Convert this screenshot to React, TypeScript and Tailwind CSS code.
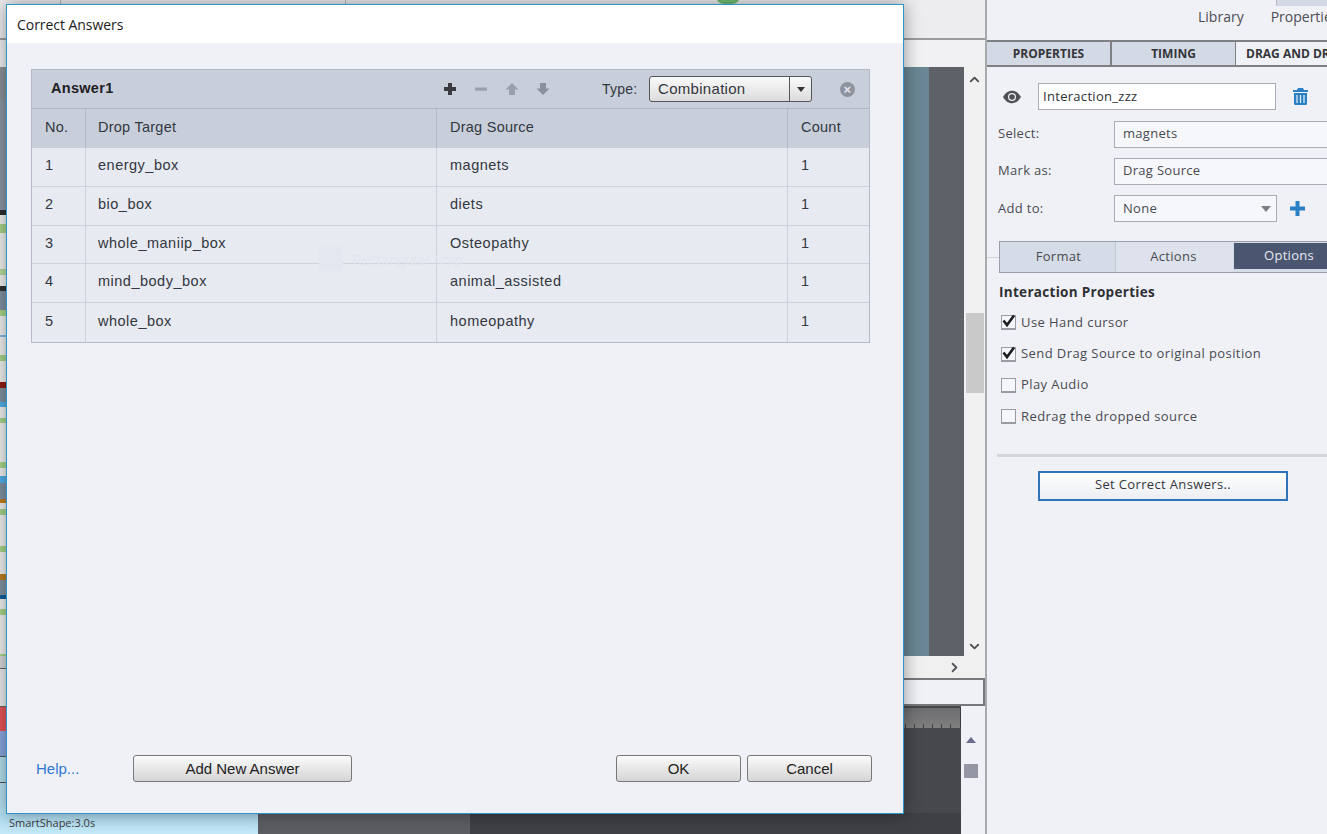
import { ChevronDown, ChevronRight, ChevronUp } from "lucide-react";

const uiFont = "font-['Open_Sans',sans-serif]";
const tableFont = "font-['Liberation_Sans',sans-serif]";

// thin slice of the timeline still visible left of the dialog
const bands = [
  "h-[33px] bg-[#8b9299]",
  "h-[110px] bg-[#8a97a5]",
  "h-[5px] bg-[#2e2e2e]",
  "h-[9px] bg-[#f1f1ef]",
  "h-[9px] bg-[#a9d68c]",
  "h-[36px] bg-[#f1f1ef]",
  "h-[6px] bg-[#b5dc9e]",
  "h-[11px] bg-[#f1f1ef]",
  "h-[5px] bg-[#333333]",
  "h-[19px] bg-[#8292a3]",
  "h-[6px] bg-[#a9d68c]",
  "h-[19px] bg-[#f1f1ef]",
  "h-[2px] bg-[#7cc0e8]",
  "h-[18px] bg-[#f1f1ef]",
  "h-[6px] bg-[#a9d68c]",
  "h-[21px] bg-[#f1f1ef]",
  "h-[6px] bg-[#8f1d12]",
  "h-[14px] bg-[#8292a3]",
  "h-[5px] bg-[#52b0ea]",
  "h-[11px] bg-[#f1f1ef]",
  "h-[6px] bg-[#a9d68c]",
  "h-[39px] bg-[#f1f1ef]",
  "h-[6px] bg-[#a9d68c]",
  "h-[8px] bg-[#f1f1ef]",
  "h-[7px] bg-[#52b0ea]",
  "h-[16px] bg-[#8292a3]",
  "h-[4px] bg-[#bd7f1f]",
  "h-[6px] bg-[#f1f1ef]",
  "h-[6px] bg-[#a9d68c]",
  "h-[31px] bg-[#f1f1ef]",
  "h-[6px] bg-[#a9d68c]",
  "h-[22px] bg-[#f1f1ef]",
  "h-[6px] bg-[#bd7f1f]",
  "h-[15px] bg-[#8292a3]",
  "h-[4px] bg-[#14609e]",
  "h-[10px] bg-[#f1f1ef]",
  "h-[6px] bg-[#a9d68c]",
  "h-[39px] bg-[#f1f1ef]",
  "h-[2px] bg-[#a9d68c]",
  "h-[12px] bg-[#d9d9d9]",
  "h-[1px] bg-[#666666]",
  "h-[37px] bg-[#ececec]",
  "h-[1px] bg-[#666666]",
  "h-[24px] bg-[#e8555a]",
  "h-[25px] bg-[#8ca6e0]",
  "h-[1px] bg-[#555555]",
  "h-[25px] bg-[#b5e0f0]",
  "h-[1px] bg-[#555555]",
  "h-[30px] bg-[#b7e1f2]",
];

const answers = [
  { no: 1, target: "energy_box", source: "magnets" },
  { no: 2, target: "bio_box", source: "diets" },
  { no: 3, target: "whole_maniip_box", source: "Osteopathy" },
  { no: 4, target: "mind_body_box", source: "animal_assisted" },
  { no: 5, target: "whole_box", source: "homeopathy" },
];

const ticks = [10, 30, 50, 70, 90, 110, 130, 150, 170, 190, 210, 230, 250];

function ToolIcon({ d, className }: { d: string; className: string }) {
  return (
    <svg width="16" height="16" viewBox="0 0 16 16" className={className}>
      <path d={d} fill="currentColor" />
    </svg>
  );
}

function GreyButton({ label, className }: { label: string; className: string }) {
  return (
    <button
      type="button"
      className={`${className} h-[27px] rounded-[3px] border border-[#77787c] bg-gradient-to-b from-[#fbfbfb] to-[#d5d5d5] pt-[1px] text-[15px] text-[#222222] ${tableFont}`}
    >
      {label}
    </button>
  );
}

function CheckRow({ label, checked }: { label: string; checked?: boolean }) {
  return (
    <div className="flex h-[31.200px] items-center gap-[5px]">
      <span className="relative h-[15px] w-[15px] border border-b-[2px] border-[#9b9ca3] bg-[#f5f6fa]">
        {checked && (
          <svg width="15" height="15" viewBox="0 0 15 15" className="absolute -left-px -top-[3px]">
            <path d="M2.500 7.500 L6 12 L13 2.500" fill="none" stroke="#1d1d1f" strokeWidth="2.600" />
          </svg>
        )}
      </span>
      <span className="text-[13px] tracking-[0.42px] text-[#4a4b50]">{label}</span>
    </div>
  );
}

function Dialog() {
  return (
    <div className={`absolute left-[6px] top-[4px] flex h-[810px] w-[898px] flex-col border border-[#2f94c8] bg-[#f0f1f7] shadow-[0_0_16px_rgba(0,0,0,0.4)] ${tableFont}`}>
      <div className={`flex h-[38px] items-center bg-white pl-[10px] text-[14px] tracking-[-0.05px] text-[#1c1c1c] ${uiFont}`}>
        Correct Answers
      </div>
      <div className="relative flex flex-1 flex-col px-[24px] pt-[26px]">
        <div className="w-[839px] border border-[#b4bac8] text-[14.5px] tracking-[0.25px] text-[#333740]">
          <div className="flex h-[39px] items-center border-b border-[#b0b6c4] bg-[#c8cfdb]">
            <span className="ml-[19px] w-[391px] text-[14.5px] font-bold tracking-[0.3px] text-[#1f2024]">Answer1</span>
            <div className="flex w-[132px] items-center gap-[15px]">
              <ToolIcon d="M6 2h4v4h4v4h-4v4H6v-4H2V6h4z" className="text-[#3a3b40]" />
              <ToolIcon d="M2 6.500h12v3.200H2z" className="text-[#9aa0ad]" />
              <ToolIcon d="M8 2l6.500 6.500H11V14H5V8.500H1.500z" className="text-[#9aa0ad]" />
              <ToolIcon d="M8 14l6.500-6.500H11V2H5v5.500H1.500z" className="text-[#8b909c]" />
            </div>
            <span className="ml-[28px] w-[47px] text-[14px]">Type:</span>
            <div className="flex h-[26px] w-[163px] items-center rounded-[3px] border border-[#55565a] bg-gradient-to-b from-[#fafafa] to-[#dcdcdc]">
              <span className="w-[139px] pl-[8px] text-[15px] tracking-[0.3px]">Combination</span>
              <span className="flex h-full flex-1 items-center justify-center border-l border-[#55565a]">
                <span className="h-0 w-0 border-x-[4px] border-t-[5px] border-x-transparent border-t-[#333333]" />
              </span>
            </div>
            <span className="ml-[28px] flex h-[15px] w-[15px] items-center justify-center rounded-full bg-[#8f939e] text-[13px] leading-none font-bold text-[#e4e7ef]">
              ×
            </span>
          </div>
          <div className="grid h-[39px] grid-cols-[53px_351px_351px_1fr] bg-[#c8cfdb]">
            <div className="flex items-center pb-[2px] pl-[13px]">No.</div>
            <div className="flex items-center border-l border-[#b4bac8] pb-[2px] pl-[12px]">Drop Target</div>
            <div className="flex items-center border-l border-[#b4bac8] pb-[2px] pl-[13px]">Drag Source</div>
            <div className="flex items-center border-l border-[#b4bac8] pb-[2px] pl-[13px]">Count</div>
          </div>
          {answers.map((row) => (
            <div
              key={row.no}
              className="grid h-[38.800px] grid-cols-[53px_351px_351px_1fr] border-b border-[#cdd2dc] bg-[#e7eaf1] tracking-[0.5px] last:border-b-0"
            >
              <div className="flex items-center pb-[2px] pl-[13px]">{row.no}</div>
              <div className="flex items-center border-l border-[#cdd2dc] pb-[2px] pl-[12px]">{row.target}</div>
              <div className="flex items-center border-l border-[#cdd2dc] pb-[2px] pl-[13px]">{row.source}</div>
              <div className="flex items-center border-l border-[#cdd2dc] pb-[2px] pl-[13px]">{row.no > 0 ? 1 : 0}</div>
            </div>
          ))}
        </div>
        {/* ghost of the previous video frame */}
        <div className={`absolute left-[312px] top-[204px] flex items-center gap-[10px] text-[14px] text-[#e2e5ed] ${uiFont}`}>
          <span className="h-[24px] w-[24px] bg-[#e3e7ef]" />
          Rectangular Snip
        </div>
        <div className="mt-auto mb-[31px] flex items-center">
          <span className="ml-[5px] w-[97px] pt-[1px] text-[15px] text-[#2e78d2]">Help...</span>
          <GreyButton label="Add New Answer" className="w-[219px]" />
          <GreyButton label="OK" className="ml-[264px] w-[125px]" />
          <GreyButton label="Cancel" className="ml-[6px] w-[125px]" />
        </div>
      </div>
    </div>
  );
}

function RightPanel() {
  return (
    <div className={`flex w-[342px] flex-col border-l-[2px] border-[#a9aaad] bg-[#f0f1f7] ${uiFont}`}>
      <div className="relative flex h-[40px] items-end gap-[27px] pb-[13px] pl-[211px] text-[14px] whitespace-nowrap text-[#4c4d52]">
        <span>Library</span>
        <span>Properties</span>
        <span className="absolute left-[289px] top-0 h-[6px] w-[60px] border-l border-[#b7bac4] bg-[#d5d9e5]" />
      </div>
      <div className="flex h-[27px] border-y-[2px] border-y-[#7f8084] text-[12px] font-bold whitespace-nowrap text-[#35363a]">
        <div className="flex w-[125px] items-center justify-center border-r-[2px] border-[#7f8084] bg-[#d3d9e5]">PROPERTIES</div>
        <div className="flex w-[124px] items-center justify-center border-r border-[#7f8084] bg-[#d3d9e5]">TIMING</div>
        <div className="flex-1 overflow-hidden bg-[#f0f1f7] pl-[10px] leading-[23px]">DRAG AND DROP</div>
      </div>
      <div className="flex flex-1 flex-col overflow-hidden pl-[11px] text-[13px] tracking-[0.3px] text-[#4a4b50]">
        <div className="mt-[16px] flex h-[27px] items-center">
          <svg width="20" height="14" viewBox="0 0 20 14" className="ml-[4px]">
            <path d="M1 7 C4 2 7 .8 10 .8 S16 2 19 7 C16 12 13 13.200 10 13.200 S4 12 1 7z" fill="#4e5056" />
            <circle cx="10" cy="7" r="4" fill="#f0f1f7" />
            <circle cx="10" cy="7" r="2.800" fill="#4e5056" />
          </svg>
          <div className="ml-[16px] flex h-[27px] w-[238px] shrink-0 items-center border border-[#a9acb5] bg-white pl-[4px] text-[#303136]">
            Interaction_zzz
          </div>
          <svg width="15" height="17" viewBox="0 0 15 17" className="ml-[17px]">
            <path d="M5 0h5l1 2h4v2H0V2h4z M1 5h13v10.500a1.500 1.500 0 0 1-1.500 1.500h-10A1.500 1.500 0 0 1 1 15.500z" fill="#2a80c4" />
            <path d="M4 7v8M7.500 7v8M11 7v8" stroke="#f0f1f7" strokeWidth="1.200" />
          </svg>
        </div>
        <div className="mt-[11px] flex h-[27px] items-center">
          <span className="w-[116px] shrink-0 pb-[2px]">Select:</span>
          <div className="flex h-full w-[240px] shrink-0 items-center border border-[#a9acb5] bg-[#f6f7fb] pb-[2px] pl-[8px]">magnets</div>
        </div>
        <div className="mt-[10px] flex h-[27px] items-center">
          <span className="w-[116px] shrink-0 pb-[2px]">Mark as:</span>
          <div className="flex h-full w-[240px] shrink-0 items-center border border-[#a9acb5] bg-[#f6f7fb] pb-[1px] pl-[8px]">Drag Source</div>
        </div>
        <div className="mt-[10px] flex h-[27px] items-center">
          <span className="w-[116px] shrink-0">Add to:</span>
          <div className="flex h-full w-[163px] shrink-0 items-center justify-between border border-[#a9acb5] bg-[#f6f7fb] pl-[8px] pr-[5px]">
            None
            <span className="h-0 w-0 border-x-[5px] border-t-[6px] border-x-transparent border-t-[#7c7e85]" />
          </div>
          <svg width="15" height="15" viewBox="0 0 15 15" className="ml-[13px]">
            <path d="M5.500 0h4v5.500H15v4H9.500V15h-4V9.500H0v-4h5.500z" fill="#2a80c4" />
          </svg>
        </div>
        <div className="relative ml-[1px] mt-[19px] flex h-[32px] w-[329px] border-y border-l border-[#9a9eaa] bg-[#d5dbe7]">
          <span className="absolute -left-[13px] top-[15px] h-px w-[12px] bg-[#d5d6db]" />
          <div className="flex w-[116px] items-center justify-center border-r border-[#c4cad6] pl-[2px]">Format</div>
          <div className="flex w-[117px] items-center justify-center bg-[#dde2ec] pr-[2px]">Actions</div>
          <div className="m-[1px] mb-[3px] flex flex-1 items-center bg-[#4a5670] pb-[1px] pl-[30px] text-[#e8eaf0]">Options</div>
        </div>
        <div className="mt-[9px] pl-[1px] text-[13.500px] font-bold tracking-[0.3px] text-[#2f3036]">Interaction Properties</div>
        <div className="mt-[5px] pl-[3px]">
          <CheckRow label="Use Hand cursor" checked />
          <CheckRow label="Send Drag Source to original position" checked />
          <CheckRow label="Play Audio" />
          <CheckRow label="Redrag the dropped source" />
        </div>
        <div className="-ml-[1px] mt-[22px] h-[3px] w-[332px] shrink-0 bg-[#d5d6db]" />
        <button
          type="button"
          className="ml-[40px] mt-[14px] h-[30px] w-[250px] border-[2px] border-[#2f74b8] bg-gradient-to-b from-white to-[#eceef2] pb-[2px] text-[13px] tracking-[0.35px] text-[#35363a]"
        >
          Set Correct Answers..
        </button>
      </div>
    </div>
  );
}

function Workspace() {
  return (
    <div className="flex h-[767px] w-[727px] flex-col">
      <div className="flex h-[589px]">
        <div className="w-[671px] bg-gradient-to-r from-[#6d8a98] to-[#6a8694]" />
        <div className="w-[35px] bg-[#5e6168]" />
        <div className="flex w-[21px] flex-col items-center justify-between bg-[#f1f1f1] pb-[2px] pt-[5px] text-[#4e4f54]">
          <ChevronUp size={15} strokeWidth={3} />
          <div className="absolute top-[313px] h-[80px] w-[18px] bg-[#c9c9c9]" />
          <ChevronDown size={15} strokeWidth={3} />
        </div>
      </div>
      <div className="flex h-[22px] items-center justify-end bg-[#f0f0f0] pr-[23px] text-[#55565a]">
        <ChevronRight size={15} strokeWidth={3} />
      </div>
      <div className="h-[28px] border-y-[2px] border-r-[2px] border-[#77787c] bg-[#f0f1f7]" />
      <div className="flex flex-1">
        <div className="flex w-[703px] flex-col bg-[#47484c] pt-[2px]">
          <div className="relative h-[20px] border-r border-[#3a3b3e] bg-gradient-to-b from-[#6c6d70] to-[#807f80]">
            <div className="flex h-full items-end justify-end gap-[8px] pr-[9px]">
              {ticks.map((t) => (
                <span key={t} className="h-[4px] w-px bg-[#3f4044]" />
              ))}
            </div>
          </div>
          <div className="flex-1" />
          <div className="flex h-[21px]">
            <div className="w-[212px] bg-[#5b5d62]" />
            <div className="flex-1 bg-[#3f4045]" />
          </div>
        </div>
        <div className="flex w-[24px] flex-col items-start bg-[#f0f1f7] pl-[3px] pt-[31px]">
          <span className="ml-[2px] h-0 w-0 border-x-[5px] border-b-[6px] border-x-transparent border-b-[#6a6c8a]" />
          <span className="mt-[21px] h-[14px] w-[14px] bg-[#9496a3]" />
        </div>
      </div>
    </div>
  );
}

export default function App() {
  return (
    <div className="relative flex h-[834px] w-[1327px] overflow-hidden bg-[#f0f1f7]">
      <div className="flex w-[985px] flex-col">
        <div className="relative flex h-[40px] border-b-[2px] border-[#9a9b9f] bg-[#ededf0]">
          <span className="ml-[60px] h-full w-px bg-[#b5b6ba]" />
          <span className="ml-[284px] h-full w-px bg-[#b5b6ba]" />
          <span className="absolute left-[716px] -top-[12px] h-[16px] w-[24px] rounded-full bg-[#6fbf73]" />
        </div>
        <div className="h-[27px] bg-[#f1f1f3]" />
        <div className="flex flex-1">
          <div className="flex h-[767px] w-[258px] flex-col">
            {bands.map((band, i) => (
              <div key={i} className={band} />
            ))}
            <div className={`flex h-[21px] items-center bg-gradient-to-b from-[#aedcf2] to-[#c4e8f7] pl-[9px] text-[11px] text-[#3c3c3c] ${uiFont}`}>
              SmartShape:3.0s
            </div>
          </div>
          <Workspace />
        </div>
      </div>
      <RightPanel />
      <Dialog />
    </div>
  );
}
